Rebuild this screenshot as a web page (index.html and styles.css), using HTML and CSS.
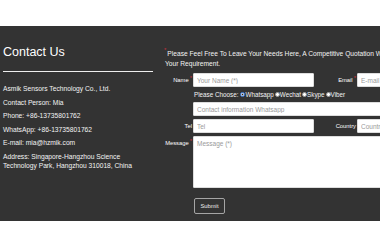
FILE: index.html
```html
<!DOCTYPE html>
<html lang="en">
<head>
    <meta charset="UTF-8">
    <meta name="viewport" content="width=device-width, initial-scale=1.0">
    <title>Contact Us</title>
    <link rel="stylesheet" href="styles.css">
</head>
<body>
    <section class="contact">
        <div class="info">
            <h2>Contact Us</h2>
            <div class="rule"></div>
            <p>Asmik Sensors Technology Co., Ltd.</p>
            <p>Contact Person: Mia</p>
            <p>Phone: +86-13735801762</p>
            <p>WhatsApp: +86-13735801762</p>
            <p>E-mail: mia@hzmik.com</p>
            <p>Address: Singapore-Hangzhou Science Technology Park, Hangzhou 310018, China</p>
        </div>

        <form class="inquiry">
            <p class="intro"><span class="req">*</span>Please Feel Free To Leave Your Needs Here, A Competitive Quotation Will Be Provided According To Your Requirement.</p>

            <div class="fields">
                <label class="lbl">Name<span class="req">*</span></label>
                <input class="field" type="text" placeholder="Your Name (*)">
                <label class="lbl">Email<span class="req">*</span></label>
                <input class="field" type="text" placeholder="E-mail (*)">

                <div class="choose">
                    <span>Please Choose:</span>
                    <label><input type="radio" name="im" checked>Whatsapp</label>
                    <label><input type="radio" name="im">Wechat</label>
                    <label><input type="radio" name="im">Skype</label>
                    <label><input type="radio" name="im">Viber</label>
                </div>

                <input class="field wide" type="text" placeholder="Contact information Whatsapp">

                <label class="lbl">Tel</label>
                <input class="field" type="text" placeholder="Tel">
                <label class="lbl">Country</label>
                <input class="field" type="text" placeholder="Country">

                <label class="lbl">Message<span class="req">*</span></label>
                <textarea class="field wide message" placeholder="Message (*)"></textarea>

                <div class="actions">
                    <button type="button" class="submit">Submit</button>
                </div>
            </div>
        </form>
    </section>
</body>
</html>
```

FILE: styles.css
```css
* {
    margin: 0;
    padding: 0;
    box-sizing: border-box;
}

body {
    font-family: 'Liberation Sans', Arial, sans-serif;
    background: #fff;
    padding-top: 26px;
}

.contact {
    background: #333;
    color: #f4f4f4;
    height: 195px;
    padding: 19px 0 0 3px;
    display: flex;
    gap: 12px;
    overflow: hidden;
}

.info {
    flex: 0 0 150px;
}

.info h2 {
    font-size: 12.5px;
    font-weight: normal;
    line-height: 15px;
    color: #fff;
}

.rule {
    height: 1px;
    background: #eee;
    margin: 11px 0 12px;
}

.info p {
    font-size: 6.7px;
    line-height: 9px;
    margin-bottom: 4.6px;
}

.inquiry {
    flex: 0 0 314px;
    padding-top: 4px;
}

.intro {
    font-size: 6.65px;
    line-height: 10px;
    margin-bottom: 4px;
}

.req {
    display: inline-block;
    color: #c8323f;
    font-size: 6px;
    line-height: 6px;
    vertical-align: top;
    margin-left: 1px;
}

.intro .req {
    margin: -2px 1px 0 -1px;
}

.fields {
    display: grid;
    grid-template-columns: 28px 121px 43px 122px;
    row-gap: 3px;
}

.lbl {
    font-size: 5.8px;
    line-height: 14px;
    text-align: right;
    padding-right: 1px;
    color: #fff;
}

.lbl .req {
    margin-top: 2px;
}

.field {
    height: 14px;
    background: #fff;
    border: 1px solid #ddd;
    border-radius: 1px;
    padding: 0 3px;
    font-family: inherit;
    font-size: 6.5px;
    color: #333;
    outline: none;
}

.field::placeholder {
    color: #9a9a9a;
}

.wide {
    grid-column: 2 / 5;
}

.message {
    height: 52px;
    padding-top: 3px;
    resize: none;
}

.choose {
    grid-column: 2 / 5;
    height: 9px;
    display: flex;
    align-items: center;
    gap: 1px;
    font-size: 6.3px;
    padding-left: 1px;
}

.choose span {
    margin-right: 1px;
}

.choose label {
    display: flex;
    align-items: center;
}

.choose input {
    appearance: none;
    width: 5px;
    height: 5px;
    border-radius: 50%;
    background: #fff;
    border: 0.5px solid #999;
}

.choose input:checked {
    border: 1px solid #3d7fe0;
    background: radial-gradient(circle, #222 0 0.8px, #fff 1.1px);
}

.actions {
    grid-column: 2;
    padding-top: 3px;
}

.submit {
    width: 31px;
    height: 16px;
    margin-left: 1px;
    background: #333;
    border: 1px solid #a5a5a5;
    border-radius: 2px;
    color: #eee;
    font-family: inherit;
    font-size: 5.8px;
}
```
